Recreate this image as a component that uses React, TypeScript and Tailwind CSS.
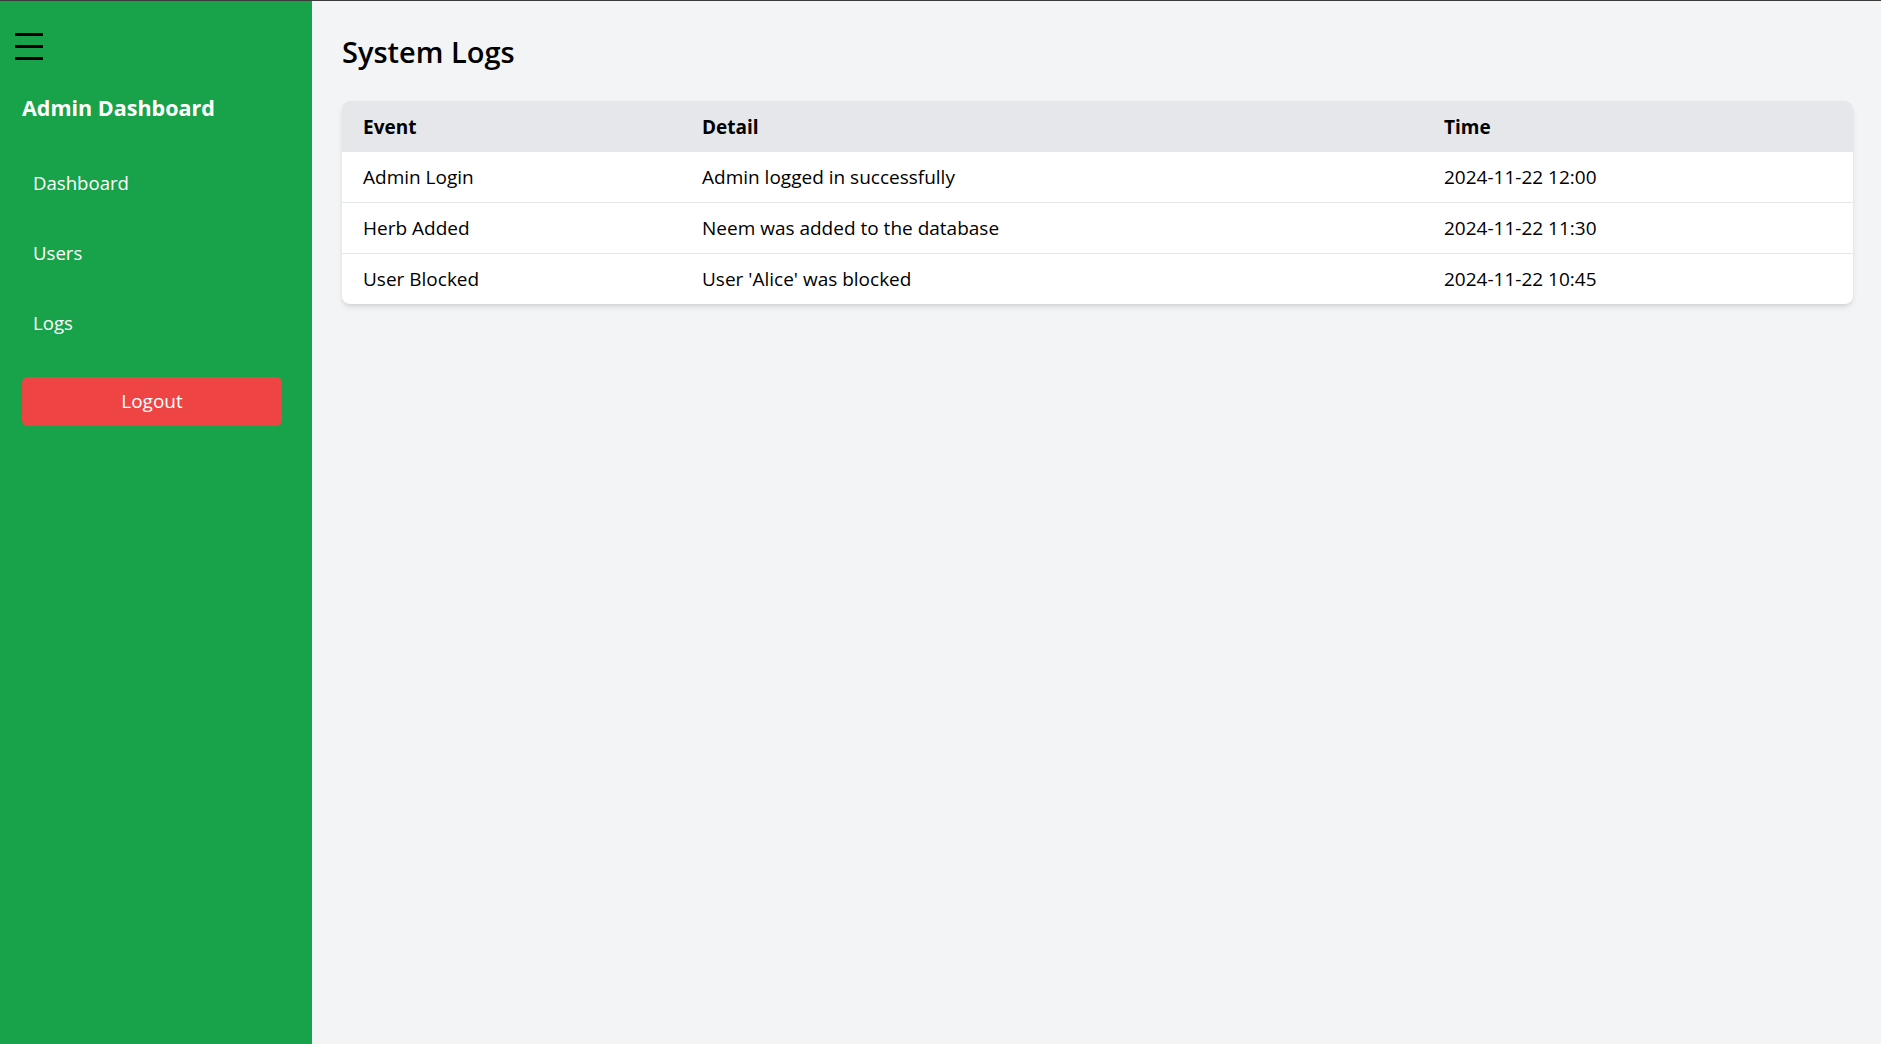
import React from "react";

type LogType = {
  event: string,
  detail: string,
  time: string,
}

const logs: Array<LogType> = [
  { event: "Admin Login", detail: "Admin logged in successfully", time: "2024-11-22 12:00" },
  { event: "Herb Added", detail: "Neem was added to the database", time: "2024-11-22 11:30" },
  { event: "User Blocked", detail: "User 'Alice' was blocked", time: "2024-11-22 10:45" },
];

const navItems = ["Dashboard", "Users", "Logs"];

const Sidebar = () => {
  return (
    <aside className="flex w-[312px] shrink-0 flex-col bg-[#18a34a] pl-[22px] pr-[30px] pt-[31px]">
      <button className="-ml-[7px] flex h-[28px] w-[28px] items-center justify-center">
        <svg width="28" height="28" viewBox="0 0 28 28">
          <rect x="0" y="1" width="28" height="3" fill="#000" />
          <rect x="0" y="13" width="28" height="3" fill="#000" />
          <rect x="0" y="25" width="28" height="3" fill="#000" />
        </svg>
      </button>
      <h2 className="mt-[33px] text-[21.5px] font-bold leading-[30px] text-white">Admin Dashboard</h2>
      <nav className="mt-[25px] flex flex-col">
        {navItems.map((item) => (
          <a
            key={item}
            href="#"
            className="block rounded px-[11px] py-[21px] text-[18.6px] leading-[28px] text-white hover:bg-green-700"
          >
            {item}
          </a>
        ))}
      </nav>
      <button className="mt-[19px] h-[49px] w-full rounded-md bg-[#ef4444] text-[19px] text-white">
        Logout
      </button>
    </aside>
  );
};

const LogsTable = () => {
  return (
    <div className="overflow-hidden rounded-lg bg-white shadow-md">
      <table className="w-full border-collapse text-left text-[19px] text-black">
        <thead className="bg-[#e5e7eb]">
          <tr>
            <th className="w-[339px] px-[21px] pb-[10px] pt-[12px] font-bold leading-[28px]">Event</th>
            <th className="w-[742px] px-[21px] pb-[10px] pt-[12px] font-bold leading-[28px]">Detail</th>
            <th className="px-[21px] pb-[10px] pt-[12px] font-bold leading-[28px]">Time</th>
          </tr>
        </thead>
        <tbody>
          {logs.map((log, index) => (
            <tr key={index} className="border-t border-[#e5e7eb]">
              <td className="px-[21px] py-[11px] leading-[28px]">{log.event}</td>
              <td className="px-[21px] py-[11px] leading-[28px]">{log.detail}</td>
              <td className="px-[21px] py-[11px] leading-[28px]">{log.time}</td>
            </tr>
          ))}
        </tbody>
      </table>
    </div>
  );
};

export default function App() {
  return (
    <div
      className="flex h-[1044px] w-full border-t border-[#3a3a3a] bg-[#f3f4f6]"
      style={{ fontFamily: "'Open Sans', 'Noto Sans', sans-serif" }}
    >
      <Sidebar />
      <main className="flex-1 pl-[30px] pr-[28px] pt-[33px]">
        <h1 className="text-[29px] font-semibold leading-[36px] text-black">System Logs</h1>
        <div className="mt-[31px]">
          <LogsTable />
        </div>
      </main>
    </div>
  );
}
